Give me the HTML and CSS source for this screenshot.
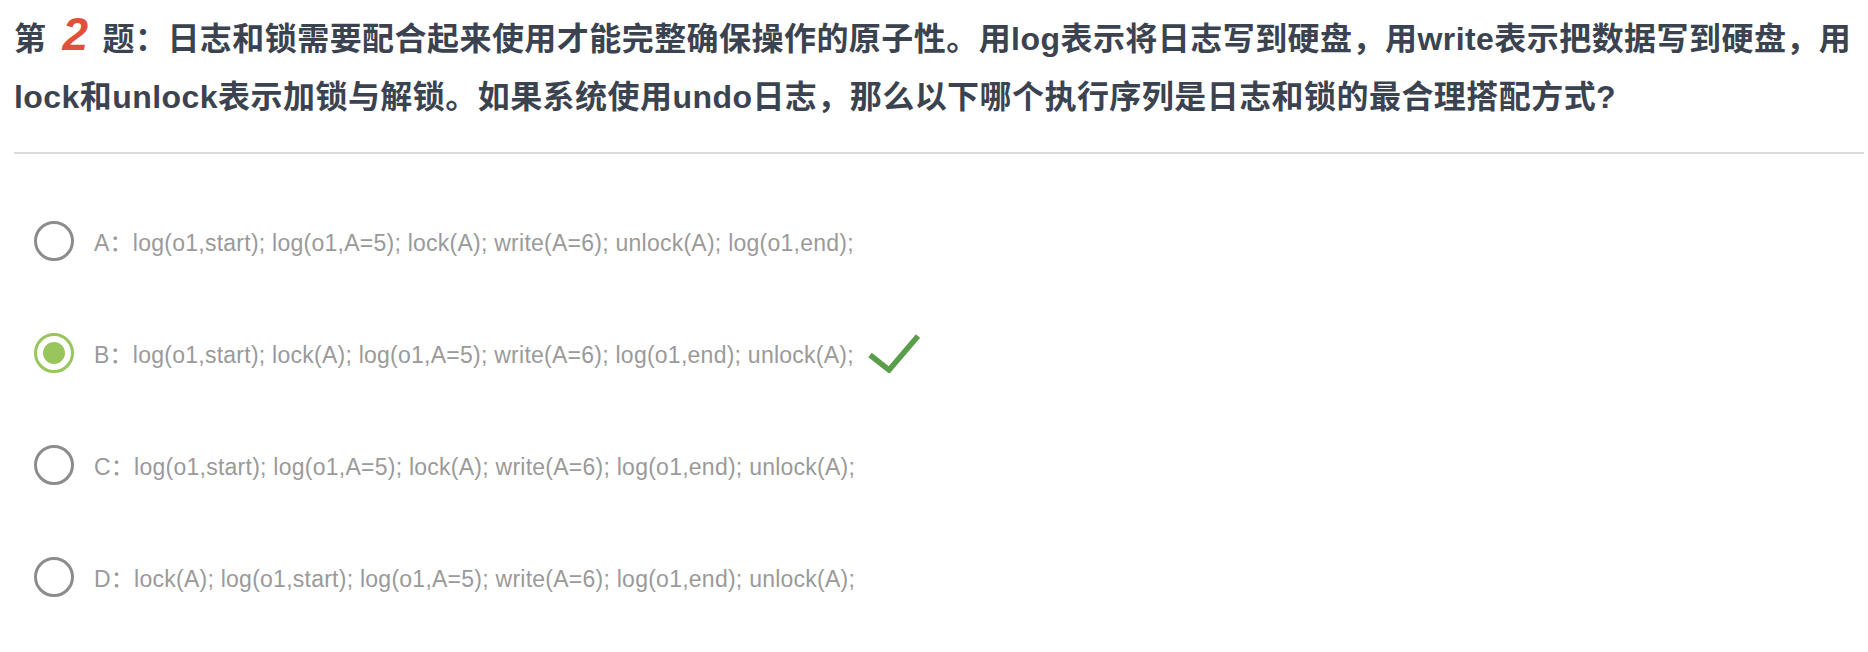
FILE: index.html
```html
<!DOCTYPE html>
<html lang="zh-CN">
<head>
<meta charset="utf-8">
<title>第2题</title>
<link rel="stylesheet" href="styles.css">
</head>
<body>
<div class="question">
  <h2 class="title">第<span class="num">2</span>题：日志和锁需要配合起来使用才能完整确保操作的原子性。用log表示将日志写到硬盘，用write表示把数据写到硬盘，用lock和unlock表示加锁与解锁。如果系统使用undo日志，那么以下哪个执行序列是日志和锁的最合理搭配方式?</h2>
  <div class="divider"></div>
  <ul class="options">
    <li class="option">
      <span class="radio"></span>
      <span class="label">A：log(o1,start); log(o1,A=5); lock(A); write(A=6); unlock(A); log(o1,end);</span>
    </li>
    <li class="option">
      <span class="radio checked"></span>
      <span class="label">B：log(o1,start); lock(A); log(o1,A=5); write(A=6); log(o1,end); unlock(A);</span>
      <svg class="tick" width="52" height="40" viewBox="0 0 52 40"><path d="M2 22 L21 37 L50 3" fill="none" stroke="#5a9e4c" stroke-width="5.5"/></svg>
    </li>
    <li class="option">
      <span class="radio"></span>
      <span class="label">C：log(o1,start); log(o1,A=5); lock(A); write(A=6); log(o1,end); unlock(A);</span>
    </li>
    <li class="option">
      <span class="radio"></span>
      <span class="label">D：lock(A); log(o1,start); log(o1,A=5); write(A=6); log(o1,end); unlock(A);</span>
    </li>
  </ul>
</div>
</body>
</html>
```
FILE: styles.css
```css
html, body {
  margin: 0;
  padding: 0;
  background: #ffffff;
}
.question {
  padding: 10px 4px 0 14px;
}
.title {
  margin: 0;
  font-family: "Liberation Sans", "Noto Sans CJK SC", sans-serif;
  font-weight: bold;
  font-size: 32px;
  line-height: 58px;
  letter-spacing: 0.45px;
  color: #3c4350;
}
.num {
  color: #e0503a;
  font-style: italic;
  font-size: 46px;
  line-height: 1;
  margin: 0 14px 0 16px;
}
.divider {
  margin-top: 26px;
  height: 2px;
  background: #dcdcdc;
}
.options {
  list-style: none;
  margin: 31px 0 0 0;
  padding: 0;
}
.option {
  height: 112px;
  display: flex;
  align-items: center;
  padding-left: 20px;
}
.radio {
  box-sizing: border-box;
  width: 40px;
  height: 40px;
  border: 3px solid #8c8c8c;
  border-radius: 50%;
  flex: none;
  display: flex;
  align-items: center;
  justify-content: center;
}
.radio.checked {
  border-color: #98c65c;
}
.radio.checked::after {
  content: "";
  width: 22px;
  height: 22px;
  border-radius: 50%;
  background: #98c65c;
}
.label {
  margin-left: 20px;
  font-family: "Liberation Sans", "Noto Sans CJK SC", sans-serif;
  font-size: 23px;
  letter-spacing: 0.25px;
  color: #9a9a9a;
}
.tick {
  margin-left: 14px;
  flex: none;
}
```
